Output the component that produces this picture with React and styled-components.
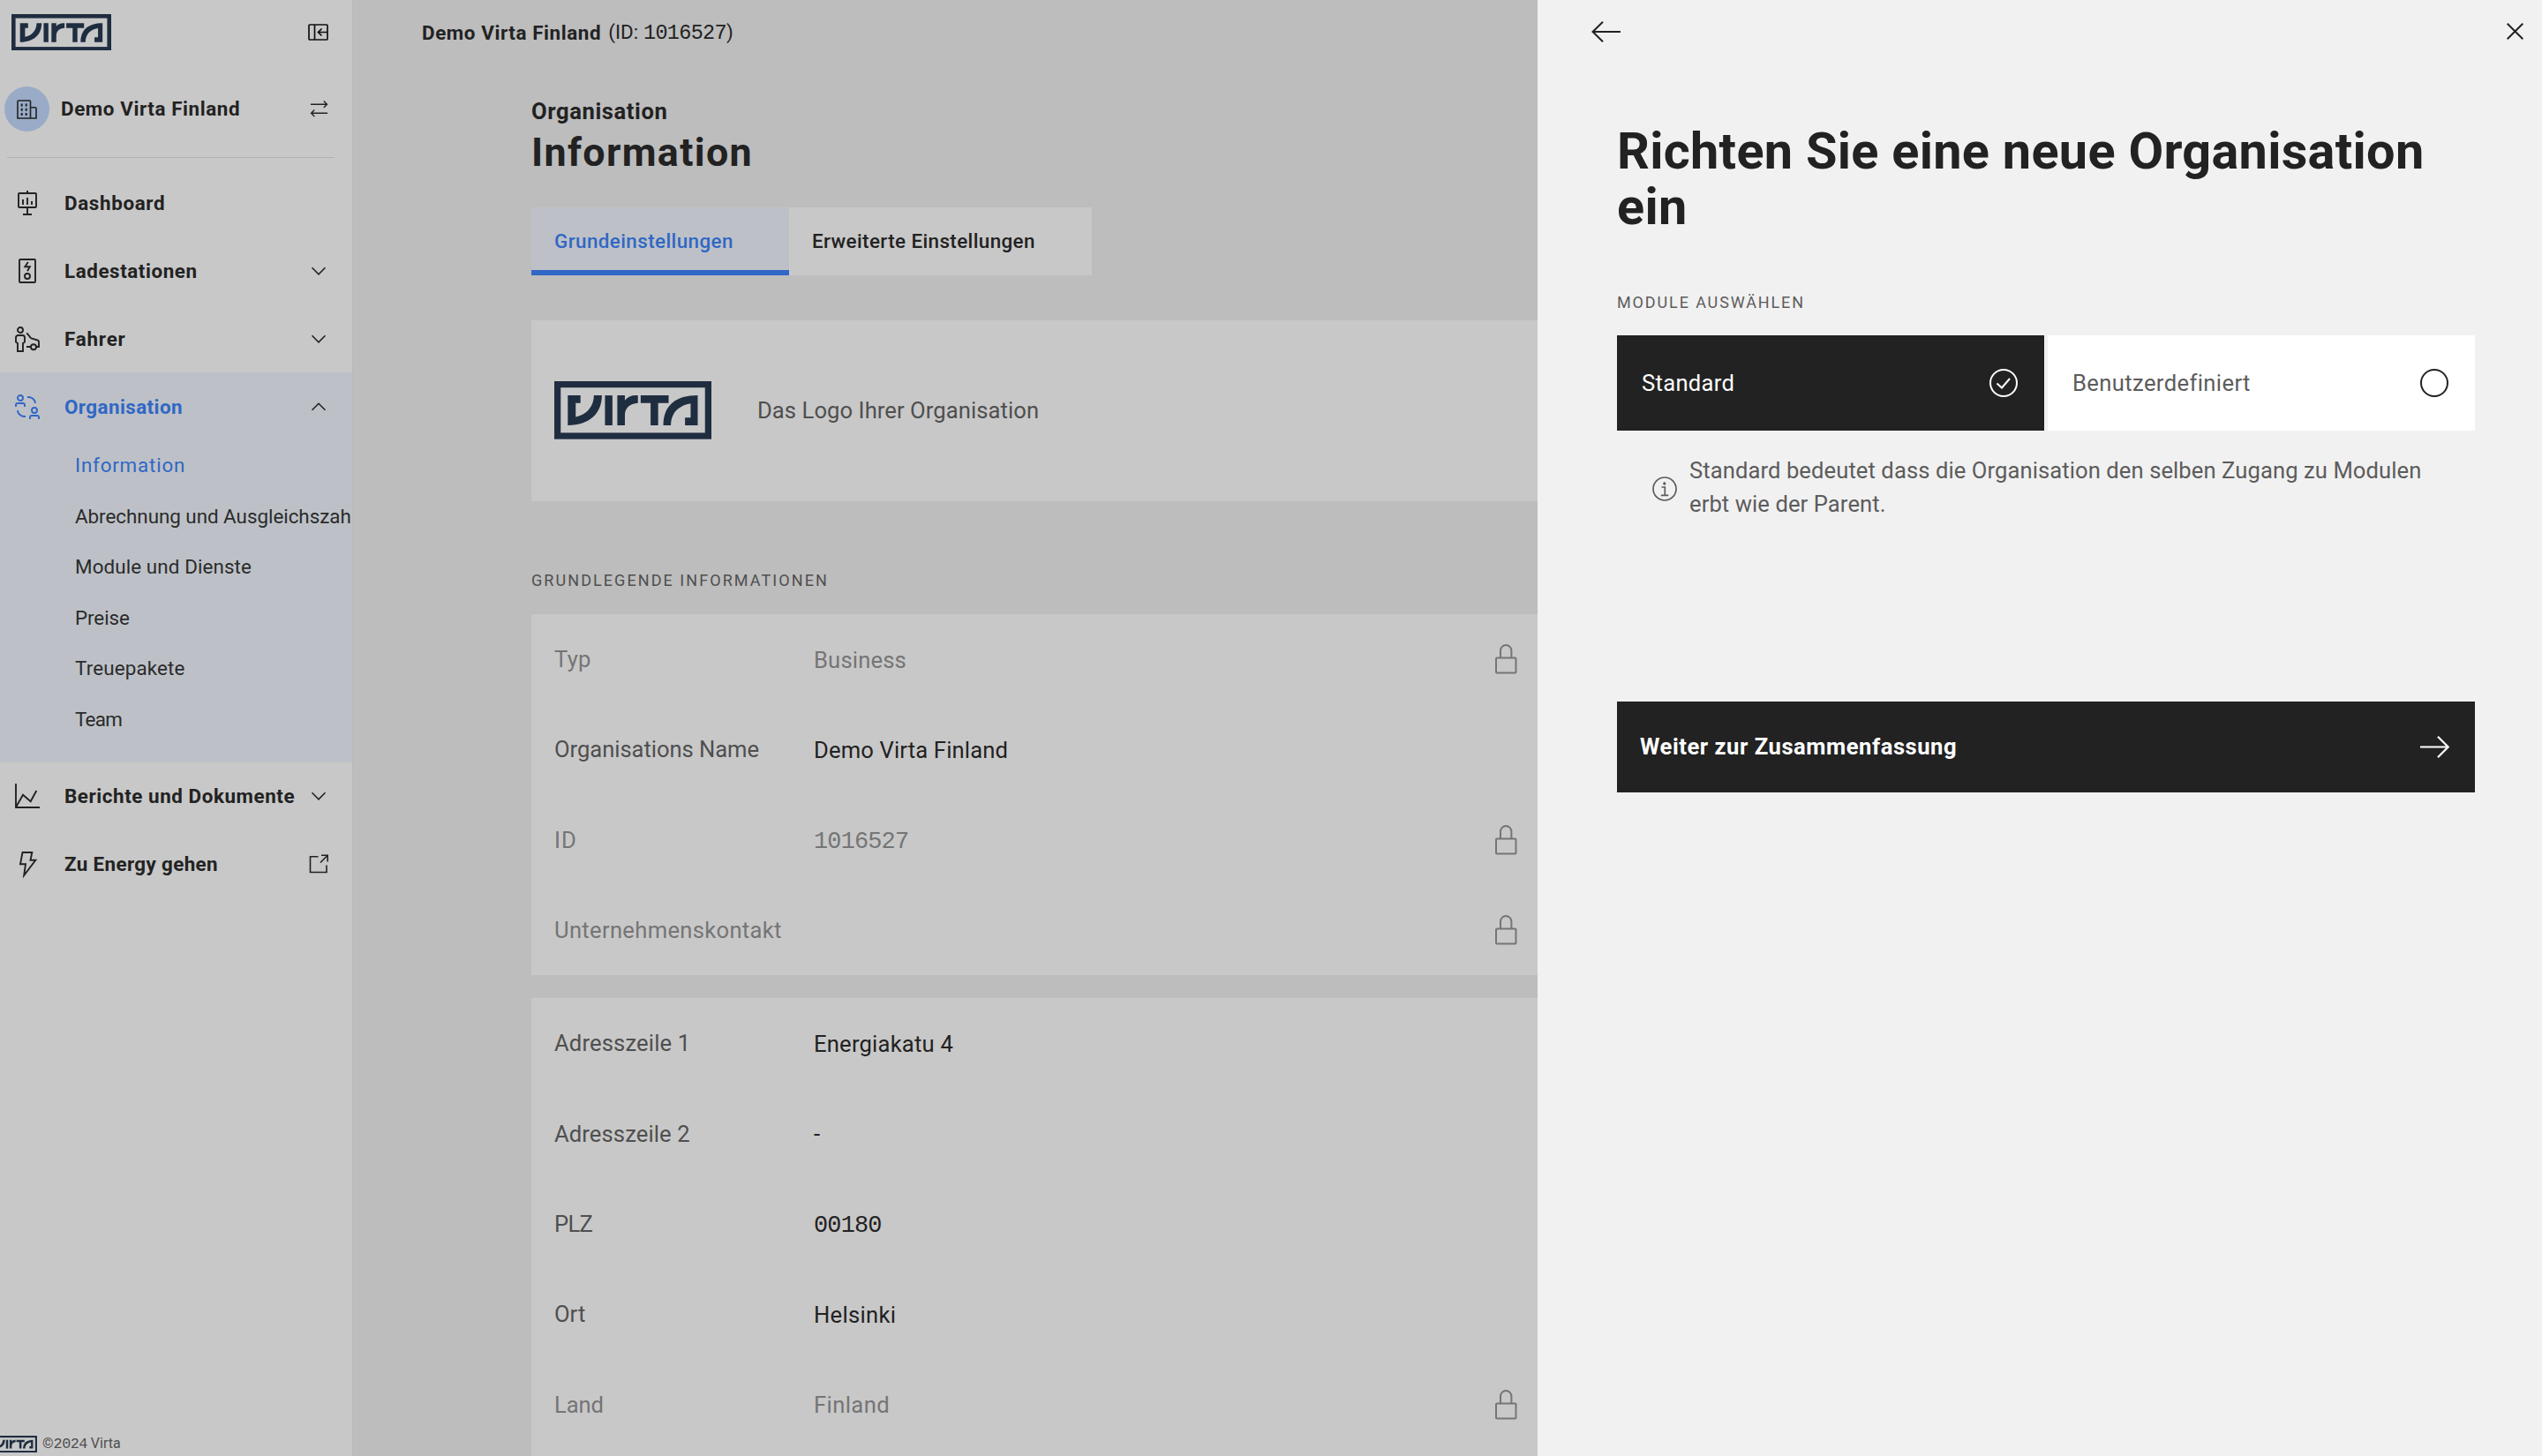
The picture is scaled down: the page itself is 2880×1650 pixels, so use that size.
import styled, { createGlobalStyle } from "styled-components";
import { useState } from "react";

const GlobalStyle = createGlobalStyle`
  * {
    box-sizing: border-box;
  }
  body {
    margin: 0;
    overflow: hidden;
    background-color: #bdbdbd;
    color: #222222;
    font-family: Roboto, "Liberation Sans", sans-serif;
    font-size: 22.4px;
  }
`;

/* ---------- shared ---------- */

const Container = styled.div`
  display: flex;
  height: 100vh;
  overflow: hidden;
`;
const Text = styled.span`
  letter-spacing: ${(props) => props.$track || 0}px;
  white-space: nowrap;
`;
const Digits = styled.span`
  font-family: "Liberation Mono", monospace;
  font-size: 1.05em;
  letter-spacing: -0.03em;
  line-height: 1;
`;
const Icon = styled.svg`
  display: block;
  flex-shrink: 0;
  fill: none;
  stroke: currentColor;
  stroke-width: ${(props) => props.$stroke || 2};
  overflow: visible;
`;
const SectionLabel = styled.div`
  font-size: 18px;
  line-height: 24px;
  letter-spacing: ${(props) => props.$track}px;
  color: ${(props) => props.color};
`;

/* ---------- sidebar ---------- */

const Sidebar = styled.aside`
  width: 400px;
  flex-shrink: 0;
  display: flex;
  flex-direction: column;
  overflow: hidden;
  background-color: #c8c8c8;
  border-right: 1px solid #b9b9b9;
`;
const SidebarTop = styled.div`
  height: 73px;
  padding: 0 27px 0 13px;
  display: flex;
  align-items: center;
  justify-content: space-between;
`;
const OrgSwitch = styled.div`
  height: 51px;
  margin-top: 25px;
  padding: 0 28px 0 5px;
  display: flex;
  align-items: center;
  font-weight: 700;
`;
const Avatar = styled.div`
  width: 51px;
  height: 51px;
  margin-right: 13px;
  border-radius: 50%;
  display: flex;
  align-items: center;
  justify-content: center;
  background-color: #99abc6;
`;
const OrgName = styled(Text)`
  flex: 1;
  padding-bottom: 1px;
`;
const Divider = styled.hr`
  width: 371px;
  height: 1px;
  margin: 29px 0 12px 8px;
  border: none;
  background-color: #b2b2b2;
`;
const NavGroup = styled.div`
  padding-bottom: ${(props) => (props.$active ? "19px" : "0")};
  background-color: ${(props) => (props.$active ? "#bdc1c7" : "transparent")};
`;
const NavItem = styled.div`
  height: 77px;
  padding-left: 17px;
  display: flex;
  align-items: center;
  gap: 28px;
  cursor: pointer;
  font-weight: 700;
  color: ${(props) => (props.$active ? "#3067c5" : "#222222")};
`;
const NavLabel = styled(Text)`
  flex: 1;
`;
const NavEnd = styled.span`
  width: 26px;
  margin-right: 25px;
  margin-left: -28px;
  display: flex;
  justify-content: center;
  color: #222222;
`;
const SubItem = styled.div`
  height: 57.6px;
  padding-left: 85px;
  line-height: 57px;
  cursor: pointer;
  color: ${(props) => (props.$active ? "#3067c5" : "#2b2b2b")};
`;
const SidebarFooter = styled.div`
  margin-top: auto;
  padding-bottom: 4px;
  display: flex;
  align-items: center;
  gap: 6px;
  margin-left: -10px;
  font-size: 16px;
  line-height: 19px;
  color: #4f4f4f;
`;

/* ---------- main ---------- */

const Main = styled.main`
  flex: 1;
  min-width: 0;
`;
const Header = styled.header`
  height: 75px;
  padding: 0 0 2px 78px;
  display: flex;
  align-items: center;
  gap: 8px;
`;
const Bold = styled(Text)`
  font-weight: 700;
`;
const Content = styled.div`
  padding: 35px 0 0 202px;
`;
const Overline = styled.div`
  font-size: 25.6px;
  line-height: 32px;
  font-weight: 700;
  letter-spacing: 0.6px;
`;
const Title = styled.h1`
  margin: 4px 0 35px;
  font-size: 44.8px;
  line-height: 54px;
  font-weight: 700;
  letter-spacing: 1.35px;
`;
const Tabs = styled.div`
  display: flex;
  height: 77px;
`;
const Tab = styled.button`
  width: ${(props) => props.$width}px;
  padding: 4px 0 0 26px;
  border: none;
  border-bottom: 6px solid ${(props) => (props.$active ? "#3067c5" : "#c8c8c8")};
  background-color: ${(props) => (props.$active ? "#bdc1c7" : "#c8c8c8")};
  color: ${(props) => (props.$active ? "#3067c5" : "#222222")};
  font: inherit;
  font-weight: 500;
  text-align: left;
  cursor: pointer;
`;
const Card = styled.section`
  margin-bottom: 26px;
  background-color: #c8c8c8;
`;
const LogoCard = styled(Card)`
  height: 205px;
  margin: 51px 0 78px;
  padding: 0 0 1px 26px;
  display: flex;
  align-items: center;
  gap: 52px;
  font-size: 25.6px;
  color: #4f4f4f;
`;
const CardHeading = styled.div`
  margin-bottom: 26px;
`;
const Row = styled.div`
  height: 102.3px;
  padding-left: 26px;
  display: grid;
  grid-template-columns: 294px 770px 28px;
  align-items: center;
  font-size: 25.6px;
`;
const RowLabel = styled(Text)`
  color: ${(props) => (props.$locked ? "#757575" : "#4f4f4f")};
`;
const RowValue = styled(Text)`
  padding-top: 1px;
  color: ${(props) => (props.$locked ? "#757575" : "#222222")};
`;
const LockCell = styled.span`
  padding-left: 2px;
  color: #757575;
`;

/* ---------- drawer ---------- */

const Drawer = styled.div`
  position: fixed;
  top: 0;
  right: 0;
  bottom: 0;
  width: 1138px;
  background-color: #f1f1f1;
`;
const DrawerTop = styled.div`
  height: 71px;
  padding: 0 21px 0 61px;
  display: flex;
  align-items: center;
  justify-content: space-between;
`;
const IconButton = styled.button`
  padding: 0;
  border: none;
  background: none;
  color: #222222;
  cursor: pointer;
`;
const DrawerBody = styled.div`
  padding: 69px 76px 0 90px;
`;
const DrawerTitle = styled.h2`
  margin: 0 0 65px;
  font-size: 57.6px;
  line-height: 63px;
  font-weight: 700;
  letter-spacing: 0.3px;
`;
const Options = styled.div`
  margin-top: 25px;
  display: flex;
  gap: 4px;
`;
const Option = styled.button`
  flex: 1;
  height: 108px;
  padding: 0 30px 0 28px;
  border: none;
  display: flex;
  align-items: center;
  justify-content: space-between;
  font: inherit;
  font-size: 25.6px;
  cursor: pointer;
  background-color: ${(props) => (props.$selected ? "#222222" : "#ffffff")};
  color: ${(props) => (props.$selected ? "#ffffff" : "#5c5c5c")};
`;
const RadioIcon = styled(Icon)`
  color: ${(props) => (props.$selected ? "#ffffff" : "#222222")};
`;
const Hint = styled.div`
  margin-top: 26px;
  padding: 0 40px;
  display: flex;
  align-items: center;
  gap: 14px;
  color: #5c5c5c;
`;
const HintIcon = styled(Icon)`
  margin-top: 3px;
`;
const HintText = styled.p`
  margin: 0;
  font-size: 25.6px;
  line-height: 38.4px;
  letter-spacing: 0.08px;
`;
const NextButton = styled.button`
  width: 100%;
  height: 103px;
  margin-top: 204px;
  padding: 0 29px 0 26px;
  border: none;
  display: flex;
  align-items: center;
  justify-content: space-between;
  font: inherit;
  font-size: 25.6px;
  font-weight: 700;
  cursor: pointer;
  background-color: #222222;
  color: #ffffff;
`;

/* ---------- icons ---------- */

const VirtaLogo = ({ width }) => (
  <svg width={width} viewBox="0 0 177 65.3" display="block">
    <rect x="3.6" y="3.6" width="169.8" height="58.1" fill="none" stroke="#1f2d40" strokeWidth="7.2" />
    <g fill="#1f2d40">
      <path d="M15.2 16H29.5V24.7H24.1V40.3C36 38 44.6 29 44.6 16H53.6C53.6 36 40 49.7 15.2 49.7Z" />
      <rect x="57.1" y="16" width="8.4" height="33.7" />
      <path d="M71 16H79.5V21.7C82.5 18 86.5 16 92 16H94.2V24.7C85 25.5 79.5 30 79.5 38.5V49.7H71Z" />
      <path d="M97.3 16H128.8V24.7H117V49.7H108.5V24.7H97.3Z" />
      <path d="M122.8 49.7C122.8 28 136 16 161.6 16V49.7H147.3V41H153.6V25.2C140 27.5 131.3 36 131.3 49.7Z" />
    </g>
  </svg>
);

const CollapseIcon = () => (
  <Icon width="23" height="19" viewBox="0 0 23 19" color="#111111" $stroke={1.7}>
    <rect x="1" y="1" width="21" height="17" rx="1" />
    <path d="M7.5 1V18M22 9.5H11.5M15.5 5.5L11.5 9.5L15.5 13.5" />
  </Icon>
);

const SwapIcon = () => (
  <Icon width="19" height="19" viewBox="0 0 19 19" $stroke={1.4}>
    <path d="M0 4.3H18.3M14.8 0.6L18.5 4.3L14.8 8M19 14.3H0.8M4.3 10.6L0.6 14.3L4.3 18" />
  </Icon>
);

const BuildingIcon = () => (
  <Icon width="23" height="22" viewBox="0 0 23 22" $stroke={1.6}>
    <path d="M1 21V2A1 1 0 0 1 2 1H14.5A1 1 0 0 1 15.5 2V21ZM15.5 8.8H21A1 1 0 0 1 22 9.8V21H15.5" />
    <path d="M5.7 4.5V7.5M10.7 4.5V7.5M5.7 9.7V12.7M10.7 9.7V12.7M5.7 14.9V17.9M10.7 14.9V17.9" strokeWidth="2" />
  </Icon>
);

const navIcons = {
  dashboard: (
    <path d="M5 3H23A1 1 0 0 1 24 4V18A1 1 0 0 1 23 19H5A1 1 0 0 1 4 18V4A1 1 0 0 1 5 3ZM14 0V3M9 10V16M14 8V16M19 12V16M14 19V27M9 27H19" />
  ),
  station: (
    <>
      <rect x="5" y="1" width="18" height="26" rx="1" />
      <path d="M14.8 4L11.3 9.3H16.8L14 14.3" />
      <circle cx="14" cy="20" r="3" />
    </>
  ),
  driver: (
    <>
      <circle cx="6" cy="4" r="3" />
      <path d="M3 19L1 17.5V12.5A2.5 2.5 0 0 1 3.5 10H8.5A2.5 2.5 0 0 1 11 12.5V17.5L9 19V28H3Z" />
      <path d="M13 7.8C15.5 8.2 16.3 12.3 18.5 13.3L25.5 15.5A2 2 0 0 1 27 17.5V23H24M13 23H18" />
      <circle cx="21" cy="23.2" r="3" />
    </>
  ),
  organisation: (
    <>
      <circle cx="6" cy="4" r="3" />
      <path d="M1 14V12A2 2 0 0 1 3 10H9A2 2 0 0 1 11 12V14" />
      <circle cx="22" cy="18" r="3" />
      <path d="M17 28V26A2 2 0 0 1 19 24H25A2 2 0 0 1 27 26V28" />
      <path d="M14 3H15.5A8 7 0 0 1 23 10M3 18A8 7 0 0 0 10.5 25H12" />
    </>
  ),
  reports: <path d="M1 0V27H28M1.5 26L9 12.7L17.7 20.3L24.3 8" />,
  energy: <path d="M8.5 1H19.3L17.5 9.7H23.3L10.2 27L12 14.2H6Z" />,
};

const endIcons = {
  down: <path d="M5.5 9.3L13 16.8L20.5 9.3" />,
  up: <path d="M5.5 16.8L13 9.3L20.5 16.8" />,
  external: <path d="M12.5 4.8H3.5V22.5H22V14.5M15 11.5L23 3.5M16 3.3H23.2V10.5" />,
};

const LockIcon = () => (
  <Icon width="25" height="34" viewBox="0 0 25 34">
    <rect x="1" y="15.5" width="22.5" height="17" rx="1" />
    <path d="M6 15.5V7.5A6.2 6.5 0 0 1 18.4 7.5V15.5" />
  </Icon>
);

/* ---------- data ---------- */

const navigation = [
  { label: "Dashboard", icon: "dashboard", track: 0.65 },
  { label: "Ladestationen", icon: "station", end: "down", track: 0.57 },
  { label: "Fahrer", icon: "driver", end: "down", track: 0.8 },
  {
    label: "Organisation",
    icon: "organisation",
    end: "up",
    track: 0.43,
    active: true,
    children: [
      { label: "Information", track: 0.8, active: true },
      { label: "Abrechnung und Ausgleichszahlungen", track: -0.03 },
      { label: "Module und Dienste", track: 0.1 },
      { label: "Preise", track: -0.08 },
      { label: "Treuepakete", track: 0.14 },
      { label: "Team", track: -0.7 },
    ],
  },
  { label: "Berichte und Dokumente", icon: "reports", end: "down", track: 0.57 },
  { label: "Zu Energy gehen", icon: "energy", end: "external", track: 0.37 },
];

const basics = [
  { label: "Typ", value: "Business", track: 0.26, valueTrack: 0.16, locked: true },
  { label: "Organisations Name", value: "Demo Virta Finland", track: -0.05, valueTrack: 0.15 },
  { label: "ID", digits: "1016527", track: 1, locked: true },
  { label: "Unternehmenskontakt", track: 0.31, locked: true },
];

const address = [
  { label: "Adresszeile 1", value: "Energiakatu 4", track: 0.15, valueTrack: 0.21 },
  { label: "Adresszeile 2", value: "-", track: 0.1 },
  { label: "PLZ", digits: "00180", track: -0.7 },
  { label: "Ort", value: "Helsinki", track: 0, valueTrack: 0.3 },
  { label: "Land", value: "Finland", track: -0.11, valueTrack: 0.4, locked: true },
];

const AddressCard = styled(Card)`
  padding-bottom: 40px;
`;

const InfoRow = ({ item }) => (
  <Row>
    <RowLabel $track={item.track} $locked={item.locked}>
      {item.label}
    </RowLabel>
    <RowValue $track={item.valueTrack} $locked={item.locked}>
      {item.digits ? <Digits>{item.digits}</Digits> : item.value}
    </RowValue>
    {item.locked && (
      <LockCell>
        <LockIcon />
      </LockCell>
    )}
  </Row>
);

const App = () => {
  const [selected, setSelected] = useState("standard");
  const [open, setOpen] = useState(true);

  return (
    <Container>
      <GlobalStyle />
      <Sidebar>
        <SidebarTop>
          <VirtaLogo width={113} />
          <CollapseIcon />
        </SidebarTop>
        <OrgSwitch>
          <Avatar>
            <BuildingIcon />
          </Avatar>
          <OrgName $track={0.59}>Demo Virta Finland</OrgName>
          <SwapIcon />
        </OrgSwitch>
        <Divider />
        {navigation.map((item) => (
          <NavGroup key={item.label} $active={item.active}>
            <NavItem $active={item.active}>
              <Icon width="28" height="28" viewBox="0 0 28 28" $stroke={1.9}>
                {navIcons[item.icon]}
              </Icon>
              <NavLabel $track={item.track}>{item.label}</NavLabel>
              {item.end && (
                <NavEnd>
                  <Icon width="26" height="26" viewBox="0 0 26 26" $stroke={1.6}>
                    {endIcons[item.end]}
                  </Icon>
                </NavEnd>
              )}
            </NavItem>
            {item.children &&
              item.children.map((child) => (
                <SubItem key={child.label} $active={child.active}>
                  <Text $track={child.track}>{child.label}</Text>
                </SubItem>
              ))}
          </NavGroup>
        ))}
        <SidebarFooter>
          <VirtaLogo width={52} />
          <Text>
            ©<Digits>2024</Digits> Virta
          </Text>
        </SidebarFooter>
      </Sidebar>

      <Main>
        <Header>
          <Bold $track={0.59}>Demo Virta Finland</Bold>
          <Text $track={0.1}>
            (ID: <Digits>1016527</Digits>)
          </Text>
        </Header>
        <Content>
          <Overline>Organisation</Overline>
          <Title>Information</Title>
          <Tabs>
            <Tab $active $width={292}>
              <Text $track={0.42}>Grundeinstellungen</Text>
            </Tab>
            <Tab $width={343}>
              <Text $track={0.4}>Erweiterte Einstellungen</Text>
            </Tab>
          </Tabs>
          <LogoCard>
            <VirtaLogo width={178} />
            <Text $track={0.07}>Das Logo Ihrer Organisation</Text>
          </LogoCard>
          <CardHeading>
            <SectionLabel color="#4f4f4f" $track={2.07}>
              GRUNDLEGENDE INFORMATIONEN
            </SectionLabel>
          </CardHeading>
          <Card>
            {basics.map((item) => (
              <InfoRow key={item.label} item={item} />
            ))}
          </Card>
          <AddressCard>
            {address.map((item) => (
              <InfoRow key={item.label} item={item} />
            ))}
          </AddressCard>
        </Content>
      </Main>

      {open && (
        <Drawer>
          <DrawerTop>
            <IconButton>
              <Icon width="33" height="24" viewBox="0 0 33 24">
                <path d="M1.5 12H33M13 0.7L1.5 12L13 23.3" />
              </Icon>
            </IconButton>
            <IconButton onClick={() => setOpen(false)}>
              <Icon width="19" height="19" viewBox="0 0 19 19">
                <path d="M0.7 0.7L18.3 18.3M18.3 0.7L0.7 18.3" />
              </Icon>
            </IconButton>
          </DrawerTop>
          <DrawerBody>
            <DrawerTitle>Richten Sie eine neue Organisation ein</DrawerTitle>
            <SectionLabel color="#5c5c5c" $track={1.88}>
              MODULE AUSWÄHLEN
            </SectionLabel>
            <Options>
              <Option
                $selected={selected === "standard"}
                onClick={() => setSelected("standard")}
              >
                <Text $track={0.3}>Standard</Text>
                <RadioIcon width="32" height="32" viewBox="0 0 32 32" $selected={selected === "standard"}>
                  <circle cx="16" cy="16" r="15" />
                  {selected === "standard" && <path d="M8.5 16.5L14 21.5L23 11" />}
                </RadioIcon>
              </Option>
              <Option
                $selected={selected === "custom"}
                onClick={() => setSelected("custom")}
              >
                <Text $track={0.38}>Benutzerdefiniert</Text>
                <RadioIcon width="32" height="32" viewBox="0 0 32 32" $selected={selected === "custom"}>
                  <circle cx="16" cy="16" r="15" />
                  {selected === "custom" && <path d="M8.5 16.5L14 21.5L23 11" />}
                </RadioIcon>
              </Option>
            </Options>
            <Hint>
              <HintIcon width="28" height="28" viewBox="0 0 28 28" $stroke={1.7}>
                <circle cx="14" cy="14" r="13" />
                <path d="M10.5 12H14.3V21M9.8 21.3H18.3" />
                <circle cx="13.8" cy="8" r="0.8" />
              </HintIcon>
              <HintText>
                Standard bedeutet dass die Organisation den selben Zugang zu Modulen erbt wie der Parent.
              </HintText>
            </Hint>
            <NextButton>
              <Text $track={0.53}>Weiter zur Zusammenfassung</Text>
              <Icon width="33" height="25" viewBox="0 0 33 25" $stroke={2.2}>
                <path d="M0 12.5H31.5M20 0.8L31.7 12.5L20 24.2" />
              </Icon>
            </NextButton>
          </DrawerBody>
        </Drawer>
      )}
    </Container>
  );
};

export default App;
